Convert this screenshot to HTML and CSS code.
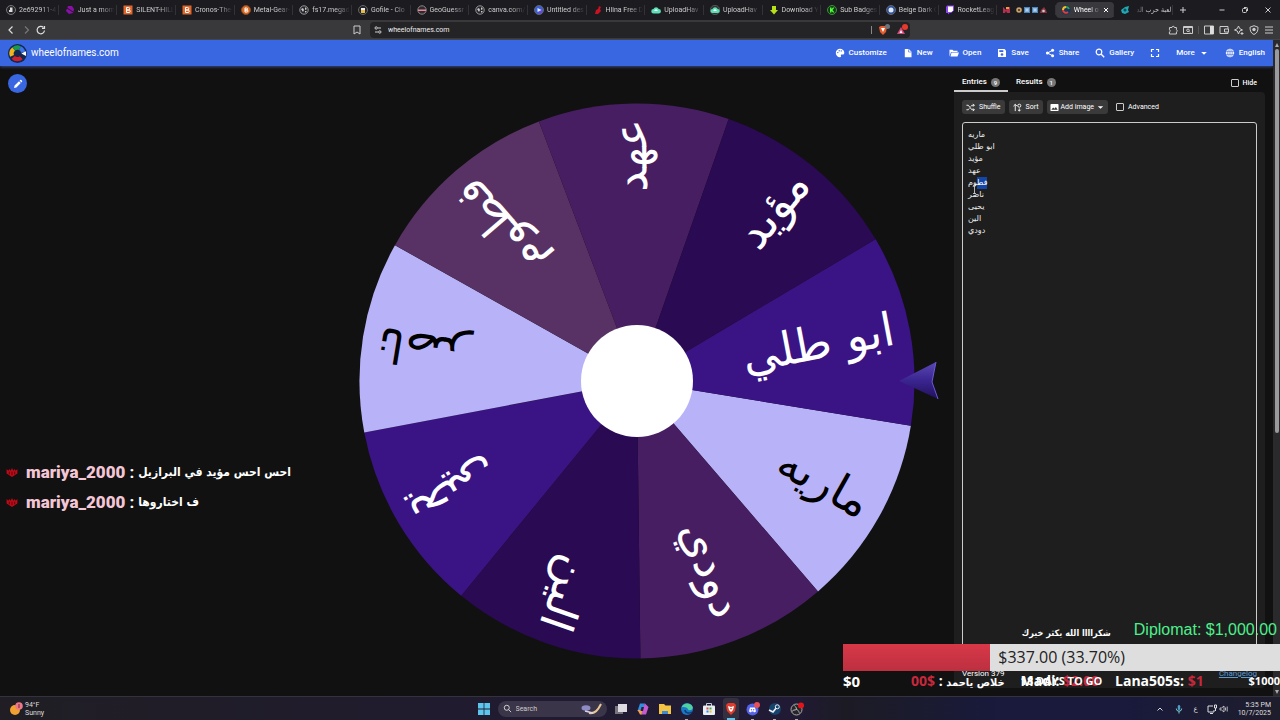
FILE: index.html
```html
<!DOCTYPE html>
<html lang="en">
<head>
<meta charset="utf-8">
<title>Wheel of Names</title>
<link rel="stylesheet" href="styles.css">
</head>
<body>
<div class="tabstrip">
  <div class="tabs">
    <div class="tab"><svg class="fav" viewBox="0 0 10 10"><circle cx="5" cy="5" r="4.5" fill="#25262b" stroke="#777"/><path d="M3 7V5h1V2.500h2.500V7z" fill="#ddd"/></svg><span>2e692911-4</span></div>
    <div class="tab"><svg class="fav" viewBox="0 0 10 10"><path d="M3 1h4l2 3-1 4-4 1-3-3z" fill="#8a0fa8"/><path d="M2 3l6 4" stroke="#1c1b20"/></svg><span>Just a mom</span></div>
    <div class="tab"><svg class="fav" viewBox="0 0 10 10"><path d="M.5.5h9v9h-9z" fill="#e0662a"/><path d="M3.500 2.500h2a1.200 1.200 0 010 2.500h-2zM3.500 5h2.500a1.200 1.200 0 010 2.500H3.500z" fill="none" stroke="#fff"/></svg><span>SILENT-HILL-</span></div>
    <div class="tab"><svg class="fav" viewBox="0 0 10 10"><path d="M.5.5h9v9h-9z" fill="#e0662a"/><path d="M3.500 2.500h2a1.200 1.200 0 010 2.500h-2zM3.500 5h2.500a1.200 1.200 0 010 2.500H3.500z" fill="none" stroke="#fff"/></svg><span>Cronos-The-</span></div>
    <div class="tab"><svg class="fav" viewBox="0 0 10 10"><circle cx="5" cy="5" r="4.500" fill="#d86a22" stroke="#8a4a20"/><path d="M4 3h1.500a1 1 0 010 2H4zM4 5h2a1 1 0 010 2H4z" fill="none" stroke="#fff"/></svg><span>Metal-Gear-</span></div>
    <div class="tab"><svg class="fav" viewBox="0 0 10 10"><circle cx="5" cy="5" r="4.200" fill="#25262b" stroke="#999"/><path d="M2 4l2-1 1 2-1 2zM6 2l2 2-2 1zM6 6h2L6 8z" fill="#ccc"/></svg><span>fs17.megad</span></div>
    <div class="tab"><svg class="fav" viewBox="0 0 10 10"><circle cx="5" cy="5" r="4.500" fill="#25262b" stroke="#666"/><path d="M3 3h4v3H3z" fill="#eee"/><path d="M3 5h4v3H3z" fill="#e5bb45"/></svg><span>Gofile - Clo</span></div>
    <div class="tab"><svg class="fav" viewBox="0 0 10 10"><circle cx="5" cy="5" r="4.200" fill="#302a30" stroke="#888"/><path d="M1 4.500h8v1.500H1z" fill="#e9899a"/></svg><span>GeoGuessr F</span></div>
    <div class="tab"><svg class="fav" viewBox="0 0 10 10"><circle cx="5" cy="5" r="4.200" fill="#25262b" stroke="#999"/><path d="M2 4l2-1 1 2-1 2zM6 2l2 2-2 1zM6 6h2L6 8z" fill="#ccc"/></svg><span>canva.com/</span></div>
    <div class="tab"><svg class="fav" viewBox="0 0 10 10"><circle cx="5" cy="5" r="4.500" fill="#3b5fd6" stroke="#666"/><circle cx="6" cy="6" r="2" fill="#7a3be0"/><path d="M3.500 3l4 2-4 2z" fill="#d8f4ff"/></svg><span>Untitled des</span></div>
    <div class="tab"><svg class="fav" viewBox="0 0 10 10"><path d="M6 1l2 1-1 2 1 2-3 3H2l1-4 2-1z" fill="#cc1122"/></svg><span>Hlina Free D</span></div>
    <div class="tab"><svg class="fav" viewBox="0 0 10 10"><path d="M2.500 8.500a2.200 2.200 0 010-4.500 2.800 2.800 0 015.200 0 2.200 2.200 0 010 4.500z" fill="#5ce0b5"/><path d="M5 4l2 2H3z" fill="#fff"/></svg><span>UploadHav</span></div>
    <div class="tab"><svg class="fav" viewBox="0 0 10 10"><circle cx="5" cy="5" r="4.700" fill="#333" stroke="#555"/><path d="M2.500 8a2 2 0 010-4 2.800 2.800 0 015.200 0 2 2 0 010 4z" fill="#5ce0b5"/><path d="M5 4l2 2H3z" fill="#fff"/></svg><span>UploadHav</span></div>
    <div class="tab"><svg class="fav" viewBox="0 0 10 10"><path d="M3 1h4v4h2L5 9.500 1 5h2z" fill="#b8e01a"/></svg><span>Download Y</span></div>
    <div class="tab"><svg class="fav" viewBox="0 0 10 10"><circle cx="5" cy="5" r="4.500" fill="#123b12" stroke="#3f8f3f"/><path d="M3 2.500h1.500V4L6 2.500h1.500L5.500 5l2 2.500H6L4.500 6v1.500H3z" fill="#4fff3a"/></svg><span>Sub Badges</span></div>
    <div class="tab"><svg class="fav" viewBox="0 0 10 10"><circle cx="5" cy="5" r="4.500" fill="#2a50a0" stroke="#666"/><circle cx="5" cy="5" r="2.500" fill="#dfeaff"/></svg><span>Beige Dark C</span></div>
    <div class="tab"><svg class="fav" viewBox="0 0 10 10"><path d="M2 .5h7v5L6 8H4.500L3 9.500V8H1V2z" fill="#8b45f0"/><path d="M3 1.500h5v4L6.500 7H3z" fill="#fff"/></svg><span>RocketLeag</span></div>
    <div class="tab emoji"><svg class="fav wide" viewBox="0 0 46 10"><path d="M1 2l3 3 1-3 3 0v6H5L4 6 3 8H1z" fill="#b72f50"/><path d="M4 2h3v2H4z" fill="#e5a238"/><circle cx="17" cy="5" r="2.800" fill="#c9a26a"/><path d="M16 4h2v2h-2z" fill="#5a4636"/><path d="M22 2h6v6h-6zM30 2h6v6h-6z" fill="#4a86bd"/><path d="M24 3v4M26 3v4M24 5h2M32 3v4M34 3v4M32 5h2" stroke="#d5e8f8"/><path d="M38 8l1-3 3-3 2 3 1 3z" fill="#8c3540"/><circle cx="41.500" cy="6" r="1.300" fill="#ccc"/></svg></div>
    <div class="tab active"><svg class="fav" viewBox="0 0 10 10"><circle cx="5" cy="5" r="4.500" fill="#16365f"/><path d="M2 5a3 3 0 013-3" stroke="#f2bd25" stroke-width="2" fill="none"/><path d="M5 2a3 3 0 013 2" stroke="#2fa24a" stroke-width="2" fill="none"/><path d="M2 5a3 3 0 005 2" stroke="#e33b35" stroke-width="2" fill="none"/></svg><span>Wheel o</span><button class="tab-close" aria-label="Close tab"><svg viewBox="0 0 6 6"><path d="M1 1l4 4M5 1L1 5" stroke="#fff"/></svg></button></div>
    <div class="tab"><svg class="fav" viewBox="0 0 10 10"><path d="M1 5l4-3 4-1-1 4 1 2-4 2-3-1z" fill="#20a9b0"/><circle cx="5" cy="5" r="1.500" fill="#0b4e60"/></svg><span dir="rtl">لعبة حرب الد</span></div>
  </div>
  <div class="window-tools">
    <button aria-label="New tab"><svg viewBox="0 0 8 8"><path d="M4 1v6M1 4h6" stroke="#ccc"/></svg></button>
    <div class="window-buttons">
      <button aria-label="Minimize"><svg viewBox="0 0 8 8"><path d="M1.500 4h5" stroke="#ccc"/></svg></button>
      <button aria-label="Restore"><svg viewBox="0 0 8 8"><rect x="1.500" y="2.500" width="4" height="4" rx="1" fill="none" stroke="#ccc"/><path d="M3 1.500h2.500a1 1 0 011 1V5" fill="none" stroke="#ccc"/></svg></button>
      <button aria-label="Close"><svg viewBox="0 0 8 8"><path d="M1.500 1.500l5 5M6.500 1.500l-5 5" stroke="#ccc"/></svg></button>
    </div>
  </div>
</div>

<div class="toolbar">
  <div class="nav-buttons">
    <button aria-label="Back"><svg viewBox="0 0 10 10"><path d="M6.500 1.500L3 5l3.500 3.500" fill="none" stroke="#ddd" stroke-width="1.200"/></svg></button>
    <button aria-label="Forward"><svg viewBox="0 0 10 10"><path d="M4 1.500L7.500 5 4 8.500" fill="none" stroke="#777" stroke-width="1.200"/></svg></button>
    <button aria-label="Reload"><svg viewBox="0 0 10 10"><path d="M8.500 5.500a3.700 3.700 0 11-1-3M8.500 1v2.500H6" fill="none" stroke="#ddd" stroke-width="1.200"/></svg></button>
  </div>
  <div class="address-row">
    <button aria-label="Bookmark"><svg viewBox="0 0 10 10"><path d="M2 1h6v8L5 7 2 9z" fill="none" stroke="#ccc"/></svg></button>
    <div class="address">
      <svg class="ic8" viewBox="0 0 8 8"><path d="M4 2h3M1 6h3" stroke="#ccc"/><circle cx="2.200" cy="2" r="1.200" fill="none" stroke="#ccc"/><circle cx="5.800" cy="6" r="1.200" fill="none" stroke="#ccc"/></svg>
      <input type="text" aria-label="Address" value="wheelofnames.com">
      <span class="bar"></span>
      <svg class="shield" viewBox="0 0 12 12"><path d="M1 3l2-1h4l2 1-1 5-3 3-3-3z" fill="#e55b2b"/><path d="M3 4h4L5 8z" fill="#fff"/><circle cx="9.500" cy="2.500" r="2.500" fill="#6d747c"/></svg>
      <svg class="shield" viewBox="0 0 12 12"><path d="M5 3l4 7H1z" fill="#d24a7a"/><path d="M5 6l1.500 3h-3z" fill="#fff"/><circle cx="9" cy="3" r="3" fill="#e8392b"/></svg>
    </div>
  </div>
  <div class="tool-icons">
    <button aria-label="Extensions"><svg viewBox="0 0 10 10"><path d="M1.500 2.500H4a1.200 1.200 0 012.400 0h2v2.200a1.200 1.200 0 010 2.300v2h-7V7a1.200 1.200 0 000-2.300z" fill="none" stroke="#ccc"/></svg></button>
    <button aria-label="Search tabs"><svg viewBox="0 0 10 10"><path d="M.5 1.500h9v7h-9z" fill="none" stroke="#ccc"/><path d="M.5 2.500h9" stroke="#ccc"/><circle cx="5" cy="5.300" r="1.300" fill="none" stroke="#ccc"/><path d="M6 6.300l1.200 1.200" stroke="#ccc"/></svg></button>
    <span class="bar dim"></span>
    <button aria-label="Sidebar"><svg viewBox="0 0 10 10"><path d="M.5 1h9v8h-9z" fill="none" stroke="#ccc"/><path d="M6 1h3.500v8H6z" fill="#ddd"/></svg></button>
    <button aria-label="Wallet"><svg viewBox="0 0 10 10"><path d="M9 4V1.500H1v7h8V7M5.500 4h4v3h-4z" fill="none" stroke="#ccc"/></svg></button>
    <button aria-label="Assistant"><svg viewBox="0 0 10 10"><path d="M4.500 1l1.200 2.600L8.500 5 5.700 6 4.500 9 3.300 6 .5 5l2.800-1.400z" fill="none" stroke="#ccc"/><path d="M8 7v3M6.500 8.500h3" stroke="#ccc"/></svg></button>
    <button aria-label="VPN"><svg viewBox="0 0 10 10"><path d="M5 .7l4 1.500c0 4-1 6-4 7.300C2 8.200 1 6.200 1 2.200z" fill="none" stroke="#ccc"/><circle cx="5" cy="4.500" r="1.700" fill="#ccc"/></svg></button>
    <button aria-label="Menu"><svg viewBox="0 0 10 10"><path d="M1 2h8M1 5h8M1 8h8" stroke="#ccc"/></svg></button>
  </div>
</div>

<div class="viewport">
  <div class="page">
    <header class="site-header">
      <a class="brand" href="#"><svg viewBox="0 0 20 20"><circle cx="10" cy="10" r="10" fill="#12284e"/><g fill="none" stroke-width="4.500"><path d="M4.300 12.500A6 6 0 016 5.300" stroke="#f0b51c"/><path d="M6 5.300A6 6 0 0112.500 4.300" stroke="#189a48"/><path d="M12.500 4.300A6 6 0 0116 9" stroke="#3c73e8"/><path d="M5.500 14A6 6 0 0014 14.500" stroke="#d01f2c"/></g><path d="M14 10l5-2.500v5z" fill="#fff"/></svg>wheelofnames.com</a>
      <nav class="site-nav">
        <button><svg viewBox="0 0 10 10"><path d="M5 .8a4.200 4.200 0 000 8.400c1 0 1.300-.8.900-1.400-.3-.8.200-1.300.9-1.300h1c1 0 1.500-.8 1.500-1.800C9.300 2.500 7.400.8 5 .8z" fill="#fff"/><circle cx="2.800" cy="4.600" r=".7" fill="#3967e2"/><circle cx="4.200" cy="2.800" r=".7" fill="#3967e2"/><circle cx="6.300" cy="2.900" r=".7" fill="#3967e2"/></svg>Customize</button>
        <button><svg viewBox="0 0 10 10"><path d="M1.800 1h4l2.700 2.700V9.200H1.800z" fill="#fff"/><path d="M5.500 1.300V4h2.800" stroke="#3967e2" stroke-width=".6" fill="none"/></svg>New</button>
        <button><svg viewBox="0 0 10 10"><path d="M.5 8.500V1.800h3l1 1h4V4H2z" fill="#fff"/><path d="M2.500 4.500H10l-1.500 4h-7z" fill="#fff"/></svg>Open</button>
        <button><svg viewBox="0 0 10 10"><path d="M1 1h6.500L9 2.500V9H1z" fill="#fff"/><path d="M2.300 2.200h4V4h-4z" fill="#3967e2"/><circle cx="5" cy="6.500" r="1.300" fill="#3967e2"/></svg>Save</button>
        <button><svg viewBox="0 0 10 10"><path d="M7.500 2.300L2.500 5l5 2.700" fill="none" stroke="#fff"/><circle cx="7.600" cy="2.300" r="1.500" fill="#fff"/><circle cx="2.400" cy="5" r="1.500" fill="#fff"/><circle cx="7.600" cy="7.700" r="1.500" fill="#fff"/></svg>Share</button>
        <button><svg viewBox="0 0 10 10"><circle cx="4" cy="4" r="2.800" fill="none" stroke="#fff" stroke-width="1.200"/><path d="M6 6l3.200 3.200" stroke="#fff" stroke-width="1.300"/></svg>Gallery</button>
        <button aria-label="Fullscreen"><svg viewBox="0 0 10 10"><path d="M1.500 4V1.500H4M6 1.500h2.500V4M8.500 6v2.500H6M4 8.500H1.500V6" fill="none" stroke="#fff" stroke-width="1.200"/></svg></button>
        <button>More<svg viewBox="0 0 10 10"><path d="M2.200 4h5.600L5 6.800z" fill="#fff"/></svg></button>
        <button><svg viewBox="0 0 10 10"><circle cx="5" cy="5" r="4.200" fill="#fff"/><path d="M1 3.600h8M1 6.400h8M5 1v8M3.500 1.500c-1 2-1 5 0 7M6.500 1.500c1 2 1 5 0 7" fill="none" stroke="#3967e2" stroke-width=".6"/></svg>English</button>
      </nav>
    </header>
    <main class="content">
      <div class="left">
        <button class="edit" aria-label="Edit title"><svg viewBox="0 0 10 10"><path d="M1 9l.6-2.400L6 2.200 7.800 4 3.400 8.400zM6.600 1.600l.6-.6a.8.800 0 011.100 0l.7.700a.8.800 0 010 1.100l-.6.600z" fill="#fff"/></svg></button>
      </div>
      <svg class="wheel" viewBox="-278 -278 556 556" role="img" aria-label="Wheel of names">
        <defs>
          <path id="slice" d="M0 0L260.800-94.900A277.500 277.500 0 0 1 260.800 94.900Z"/>
          <linearGradient id="pin" x1="0" y1="0" x2="0" y2="1"><stop offset="0" stop-color="#5b48b4"/><stop offset=".5" stop-color="#3a2590"/><stop offset="1" stop-color="#22105c"/></linearGradient>
        </defs>
        <g transform="rotate(29.300)" fill="#b8b3f8"><use href="#slice"/><text class="name dark" x="262" y="12">ماريه</text></g>
        <g transform="rotate(69.300)" fill="#481e62"><use href="#slice"/><text class="name" x="252" y="12">دودي</text></g>
        <g transform="rotate(109.300)" fill="#2a0a52"><use href="#slice"/><text class="name" x="262" y="12">الين</text></g>
        <g transform="rotate(149.300)" fill="#3a1484"><use href="#slice"/><text class="name" x="262" y="12">يحيى</text></g>
        <g transform="rotate(189.300)" fill="#b8b3f8"><use href="#slice"/><text class="name dark" x="262" y="12">ناصر</text></g>
        <g transform="rotate(229.300)" fill="#583264"><use href="#slice"/><text class="name" x="262" y="12">فطوم</text></g>
        <g transform="rotate(269.300)" fill="#481e62"><use href="#slice"/><text class="name" x="262" y="12">عهد</text></g>
        <g transform="rotate(309.300)" fill="#2a0a52"><use href="#slice"/><text class="name" x="262" y="12">مؤيد</text></g>
        <g transform="rotate(349.300)" fill="#3a1484"><use href="#slice"/><text class="name" x="262" y="12">ابو طلي</text></g>
        <circle r="56" fill="#fff"/>
        <path d="M262 0L299-19 295 1 301 18Z" fill="url(#pin)"/>
        <path d="M299-19L295 1 301 18" fill="none" stroke="#6a5ad8"/>
      </svg>
      <aside class="panel">
        <div class="panel-tabs">
          <button class="ptab current">Entries <span class="count">9</span></button>
          <button class="ptab">Results <span class="count">1</span></button>
          <label class="check hide"><input type="checkbox">Hide</label>
        </div>
        <div class="card">
          <div class="actions">
            <button class="btn"><svg viewBox="0 0 10 10"><path d="M.5 2.500h2l4 5h2.500M.5 7.500h2l1.200-1.500M5.300 4L6.500 2.500H9M7.800 1l1.500 1.500L7.800 4M7.800 6l1.500 1.500L7.800 9" fill="none" stroke="#fff"/></svg>Shuffle</button>
            <button class="btn"><svg viewBox="0 0 10 10"><path d="M2.500 9V1.500M.5 3.500l2-2 2 2M7 6v3M5.500 7.500L7 9l1.500-1.500" fill="none" stroke="#fff"/><circle cx="7" cy="3" r="1.700" fill="none" stroke="#fff"/></svg>Sort</button>
            <button class="btn tight"><svg viewBox="0 0 10 10"><rect x=".5" y="1" width="9" height="8" rx="1" fill="#fff"/><path d="M1.500 7.500l2-2.500 1.500 1.500L6.500 4.500l2 3z" fill="#333"/></svg>Add image<svg viewBox="0 0 10 10"><path d="M2 3.500h6L5 6.500z" fill="#fff"/></svg></button>
            <label class="check"><input type="checkbox">Advanced</label>
          </div>
          <textarea id="entries" aria-label="Entries" spellcheck="false">ماريه
ابو طلي
مؤيد
عهد
فطوم
ناصر
يحيى
الين
دودي</textarea>
          <div class="card-foot"><span>Version 379</span><a href="#">Changelog</a></div>
          <svg class="ibeam" viewBox="0 0 5 9"><path d="M1 .5h3M1 8.500h3M2.500.5v8" stroke="#ddd" stroke-width=".8"/></svg>
        </div>
      </aside>
    </main>
  </div>
  <div class="scrollbar"><span class="arrow-up"></span><span class="thumb"></span><span class="arrow-down"></span></div>

  <div class="chat">
    <p><svg viewBox="0 0 12 10"><path d="M0 1l2 2 1-2 1.500 2L6 0l1.500 3L9 1l1 2 2-2v5L9 8 6 10 3 8 0 6z" fill="#c00a18"/><path d="M3 4v3M6 4v4M9 4v3" stroke="#4a0309"/></svg><b>mariya_2000</b><span>:</span><bdi>احس احس مؤيد في البرازيل</bdi></p>
    <p><svg viewBox="0 0 12 10"><path d="M0 1l2 2 1-2 1.500 2L6 0l1.500 3L9 1l1 2 2-2v5L9 8 6 10 3 8 0 6z" fill="#c00a18"/><path d="M3 4v3M6 4v4M9 4v3" stroke="#4a0309"/></svg><b>mariya_2000</b><span>:</span><bdi>ف اختاروها</bdi></p>
  </div>

  <div class="goal">
    <div class="top-donor"><span class="thanks" dir="rtl">شكراااا الله يكثر خيرك</span><span class="diplomat">Diplomat: $1,000.00</span></div>
    <div class="goal-bar"><div class="goal-fill" style="width:33.7%"></div><span>$337.00 (33.70%)</span></div>
    <div class="goal-foot">
      <span class="zero">$0</span>
      <div class="ticker">
        <span><i>00$</i> : <bdi>خلاص ياحمد</bdi></span>
        <span class="stack">Madi: <i>$2.00</i><em>18 DAYS TO GO</em></span>
        <span>Lana505s: <i>$1</i></span>
      </div>
      <span class="total">$1000</span>
    </div>
  </div>
</div>

<div class="taskbar">
  <div class="weather"><svg viewBox="0 0 14 14"><circle cx="6" cy="8" r="5" fill="#f0a130"/><circle cx="10" cy="4" r="3.800" fill="#e8788a"/><path d="M10 2v4" stroke="#7a2030"/></svg><div>94°F<br>Sunny</div></div>
  <div class="apps">
    <button aria-label="Start"><svg viewBox="0 0 14 14"><path d="M1 1h5.600v5.600H1zM7.400 1H13v5.600H7.400zM1 7.400h5.600V13H1zM7.400 7.400H13V13H7.400z" fill="#5cc5ee"/></svg></button>
    <label class="search"><svg viewBox="0 0 10 10"><circle cx="4.200" cy="4.200" r="2.800" fill="none" stroke="#ddd"/><path d="M6.300 6.300L9 9" stroke="#ddd"/></svg><input type="text" placeholder="Search" aria-label="Search"><svg class="art" viewBox="0 0 22 12"><ellipse cx="5" cy="5" rx="4.500" ry="2.800" fill="#8e8bc4"/><path d="M8 10c6 1 9-3 12-9" fill="none" stroke="#e8c795" stroke-width="2"/><path d="M4 8l8 2" stroke="#d8d4ea" stroke-width="1.500"/></svg></label>
    <button aria-label="Task view"><svg viewBox="0 0 14 14"><path d="M1 4h8v8H1z" fill="#77747c"/><path d="M4 2h9v8H4z" fill="#dedce2"/></svg></button>
    <button aria-label="Copilot"><svg viewBox="0 0 14 14"><path d="M4 1.500h5L7 9H1.500z" fill="#2f8ee0"/><path d="M9 1.500l3.500 3.500L10 12.500H5L7.500 5z" fill="#c65bd0"/><path d="M1.500 8h5l-1 4.500H4z" fill="#f0a050"/><path d="M5.500 5L8 5 7 9H4.500z" fill="#2b2038"/></svg></button>
    <button aria-label="File Explorer"><svg viewBox="0 0 14 14"><path d="M1 2h5l1.500 1.500H13V12H1z" fill="#f5c443"/><path d="M4 9h6v3H4z" fill="#3f8ad8"/></svg></button>
    <button class="running" aria-label="Edge"><svg viewBox="0 0 14 14"><circle cx="7" cy="7" r="6" fill="#1a78c8"/><path d="M1.500 5.500C3 1 10 0 12.500 4.500 14 8 9 9 8 7.500c0-2-4-3-6.500-2z" fill="#4fd0a0"/><path d="M5 8c0 3 4 4 7 2" fill="none" stroke="#103c70" stroke-width="1.500"/></svg></button>
    <button aria-label="Store"><svg viewBox="0 0 14 14"><path d="M4.500 4V1.500h5V4" fill="none" stroke="#bcd"/><rect x="1" y="3.500" width="12" height="9.500" rx="1" fill="#e8eef2"/><path d="M4.500 5.500h2v2h-2z" fill="#e44"/><path d="M7.500 5.500h2v2h-2z" fill="#4a4"/><path d="M4.500 8.500h2v2h-2z" fill="#38e"/><path d="M7.500 8.500h2v2h-2z" fill="#eb3"/></svg></button>
    <button class="running on" aria-label="Brave"><svg viewBox="0 0 14 14"><path d="M2 3l2-2h6l2 2-1 6-4 4-4-4z" fill="#e33b2b"/><path d="M4 4l3 1 3-1-1 4-2 2-2-2z" fill="#fff"/><path d="M6 6h2l-1 2z" fill="#e33b2b"/></svg></button>
    <button class="running" aria-label="Discord"><svg viewBox="0 0 14 14"><circle cx="6.500" cy="7.500" r="6" fill="#5562e8"/><path d="M3 9.500l1-4h5l1 4-2 1-.5-1h-2l-.5 1z" fill="#fff"/><circle cx="11" cy="3" r="3" fill="#e5505a"/><circle cx="5.500" cy="7.700" r=".7" fill="#5562e8"/><circle cx="7.700" cy="7.700" r=".7" fill="#5562e8"/></svg></button>
    <button class="running" aria-label="Steam"><svg viewBox="0 0 14 14"><circle cx="7" cy="7" r="6" fill="#14436d"/><path d="M1 8l4 2 4-5" fill="none" stroke="#eee" stroke-width="1.700"/><circle cx="9.300" cy="4.800" r="2" fill="#14436d" stroke="#eee"/></svg></button>
    <button class="running" aria-label="OBS"><svg viewBox="0 0 14 14"><circle cx="6.500" cy="7.500" r="5.500" fill="#26252a" stroke="#aaa"/><path d="M6.500 7.500c0-3-2-3-2-4M6.500 7.500c3 1 2 3 3 3.500M6.500 7.500c-2 1-4 0-4 2" fill="none" stroke="#bbb"/><circle cx="11" cy="3.500" r="3" fill="#e0161c"/></svg></button>
  </div>
  <div class="tray">
    <svg viewBox="0 0 10 10"><path d="M2.500 6.500L5 4l2.500 2.500" fill="none" stroke="#ddd"/></svg>
    <svg viewBox="0 0 10 10"><rect x="3.800" y="1" width="2.400" height="5" rx="1.200" fill="#4e9fc4"/><path d="M2.300 4.500a2.700 2.700 0 005.400 0M5 7v2.500" fill="none" stroke="#7cc"/></svg>
    <span>ع</span>
    <div class="net"><svg viewBox="0 0 10 10"><path d="M6 2H1v6h6V6M3 9.500h3M7.500 1h2v3h-2zM8.500 4v3" fill="none" stroke="#ddd"/></svg><svg viewBox="0 0 10 10"><path d="M1 4h1.500L5 2v6L2.500 6H1z" fill="none" stroke="#ddd" stroke-width=".8"/><path d="M6.500 3.500v3M8.200 2.500v5" stroke="#ddd" stroke-width=".8"/></svg></div>
    <div class="clock">5:35 PM<br>10/7/2025</div>
  </div>
</div>
<script src="script.js"></script>
</body>
</html>
```
FILE: styles.css
```css
* { box-sizing: border-box; }
body {
  margin: 0;
  height: 100vh;
  display: flex;
  flex-direction: column;
  overflow: hidden;
  background: #111;
  color: #fff;
  font: 8px/12px Roboto, "DejaVu Sans", sans-serif;
}
button { background: none; border: 0; padding: 0; margin: 0; color: inherit; font: inherit; display: flex; align-items: center; justify-content: center; }
input, textarea { font: inherit; color: inherit; margin: 0; }
svg { display: block; flex: none; }
p { margin: 0; }
i, em { font-style: normal; }

.tabstrip { flex: none; height: 20px; display: flex; background: #1c1b20; color: #ccc; font-size: 7px; }
.tabs { flex: 1; min-width: 0; display: flex; }
.tab { flex: 1 1 58px; min-width: 0; display: flex; align-items: center; gap: 3px; padding: 0 2px 0 6px; position: relative; }
.tab::after { content: ""; position: absolute; right: 0; top: 5px; height: 10px; width: 1px; background: #333238; }
.tab span { flex: 1; min-width: 0; overflow: hidden; white-space: nowrap; mask-image: linear-gradient(90deg, #000 60%, transparent); }
.tab span[dir] { mask-image: linear-gradient(270deg, #000 60%, transparent); font: 7px/12px "DejaVu Sans Condensed", "DejaVu Sans", sans-serif; }
.fav { width: 10px; height: 10px; }
.fav.wide { width: 46px; }
.emoji { padding: 0 5px; }
.active { background: #39383d; border-radius: 4px; margin: 2px 0; color: #fff; padding: 0 5px; }
.tab-close svg { width: 6px; height: 6px; }
.window-tools { flex: none; width: 107px; display: flex; justify-content: space-between; padding: 0 8px 0 6px; }
.window-tools svg { width: 8px; height: 8px; }
.window-buttons { display: flex; gap: 15px; }

.toolbar { flex: none; height: 20px; display: grid; grid-template-columns: 352fr 558fr 370fr; align-items: center; background: #39393c; border-bottom: 1px solid #444448; }
.toolbar button svg { width: 10px; height: 10px; }
.nav-buttons { display: flex; gap: 5px; padding-left: 6px; }
.address-row { display: flex; align-items: center; gap: 8px; }
.address { flex: 1; height: 16px; display: flex; align-items: center; gap: 6px; padding: 0 2px 0 4px; background: #242427; border-radius: 4px; }
.address input { flex: 1; min-width: 0; padding: 0; background: none; border: 0; color: #eee; font-size: 7px; }
.ic8 { width: 8px; height: 8px; }
.shield { width: 12px; height: 12px; }
.bar { width: 1px; height: 8px; background: #888; }
.bar.dim { background: #555; }
.tool-icons { display: flex; align-items: center; justify-content: flex-end; gap: 5px; padding-right: 6px; }

.viewport { flex: 1; min-height: 0; display: flex; position: relative; }
.page { flex: 1; min-width: 0; display: flex; flex-direction: column; }
.site-header { flex: none; height: 26px; display: flex; align-items: center; justify-content: space-between; padding: 0 8px; background: #3967e2; box-shadow: 0 1px 3px #3a4a80; }
.brand { display: flex; align-items: center; gap: 4px; color: #fff; text-decoration: none; font-size: 10px; line-height: 16px; }
.brand svg { width: 19px; height: 19px; }
.site-nav { display: flex; gap: 16px; font-weight: 500; font-size: 8px; }
.site-nav button { gap: 4px; }
.site-nav svg { width: 10px; height: 10px; }

.content { flex: 1; min-height: 0; display: grid; grid-template-columns: 1fr minmax(0, 556px) 1fr; align-items: center; }
.left { align-self: start; padding: 8px; }
.edit { width: 19px; height: 19px; border-radius: 50%; background: #3967e2; }
.edit svg { width: 10px; height: 10px; }
.wheel { width: 100%; overflow: visible; }
.name { font: 46px "DejaVu Sans", sans-serif; text-anchor: end; fill: #fff; }
.name.dark { fill: #000; }

.panel { align-self: stretch; justify-self: end; width: 311px; margin: 8px 8px 8px 0; display: flex; flex-direction: column; }
.panel-tabs { flex: none; height: 18px; display: flex; font-weight: 500; }
.ptab { padding: 0 8px; gap: 4px; border-bottom: 2px solid transparent; }
.ptab.current { border-color: #ccc; }
.count { width: 9px; height: 9px; border-radius: 50%; background: #777; font-size: 6px; line-height: 9px; text-align: center; }
.check { display: flex; align-items: center; gap: 4px; font-size: 7px; }
.check input { appearance: none; width: 8px; height: 8px; border: 1px solid #ccc; border-radius: 1px; }
.hide { margin-left: auto; padding-right: 8px; }
.card { flex: 1; min-height: 0; position: relative; display: flex; flex-direction: column; padding: 8px; background: #1e1e1e; border-radius: 0 4px 4px 4px; }
.ibeam { position: absolute; left: 18px; top: 93px; width: 5px; height: 9px; }
.actions { flex: none; display: flex; gap: 4px; font-size: 7px; margin-bottom: 8px; }
.btn { height: 14px; padding: 0 4px; gap: 4px; border-radius: 3px; background: #3a3a3a; }
.btn svg { width: 9px; height: 9px; }
.btn.tight { gap: 2px; padding: 0 3px; }
.actions .check { margin-left: 4px; }
#entries { flex: 1; min-height: 0; width: 100%; resize: none; overflow: hidden; padding: 6px 5px; background: #1e1e1e; border: 1px solid #ccc; border-radius: 3px; outline: 0; font: 8px/12px "DejaVu Sans", sans-serif; color: #eee; }
#entries::selection { background: #1446a8; color: #fff; }
.card-foot { flex: none; display: flex; justify-content: space-between; font-size: 8px; line-height: 12px; }
.card-foot a { color: #5b9bd5; }

.scrollbar { flex: none; width: 7px; display: flex; flex-direction: column; align-items: center; background: #2a2a2c; padding: 3px 0 2px; }
.thumb { width: 4px; height: 59%; margin-top: 2px; border-radius: 2px; background: #9a9a9c; }
.arrow-up, .arrow-down { border: 2px solid transparent; }
.arrow-up { border-bottom-color: #aaa; border-top: 0; border-bottom-width: 4px; }
.arrow-down { margin-top: auto; border-top-color: #aaa; border-bottom: 0; border-top-width: 4px; }

.chat { position: absolute; left: 6px; bottom: 179px; font-size: 17px; line-height: 30px; font-weight: 700; }
.chat p { display: flex; align-items: center; white-space: nowrap; gap: 4px; }
.chat svg { width: 12px; height: 9px; margin-right: 4px; }
.chat b { color: #f3c6d6; }
.chat bdi { font-family: "DejaVu Sans Condensed", "DejaVu Sans", sans-serif; font-size: 12px; }

.goal { position: absolute; right: 0; bottom: 4px; width: 437px; }
.top-donor { display: flex; justify-content: flex-end; align-items: center; gap: 23px; height: 28px; padding-right: 3px; white-space: nowrap; }
.thanks { font: bold 9px "DejaVu Sans Condensed", "DejaVu Sans", sans-serif; padding-top: 6px; }
.diplomat { font: 16px "Liberation Sans", sans-serif; color: #4cf08c; }
.goal-bar { position: relative; display: flex; height: 27px; background: #dedede; color: #222; font: 16px/27px "Open Sans", sans-serif; }
.goal-bar span { padding-left: 8px; }
.goal-fill { background: linear-gradient(#d83848, #bc3040); }
.goal-foot { display: flex; align-items: flex-start; height: 21px; font: bold 14px/20px "Open Sans", "DejaVu Sans", sans-serif; white-space: nowrap; }
.zero { width: 68px; font-size: 15px; }
.ticker { flex: 1; min-width: 0; display: flex; gap: 16px; overflow: hidden; }
.ticker i { color: #c8283c; }
.ticker bdi { font-family: "DejaVu Sans Condensed", "DejaVu Sans", sans-serif; font-size: 11px; }
.stack { position: relative; }
.stack em { position: absolute; left: 0; top: 0; font-size: 11px; }
.total { font-size: 11px; }

.taskbar { flex: none; height: 24px; display: grid; grid-template-columns: 1fr auto 1fr; align-items: center; border-top: 1px solid #34323c; background: linear-gradient(90deg, #201e24, #201b30 40%, #211a35 62%, #1c1b24 66%, #191a3c 78%, #191a3c 88%, #1e1d2c); color: #ddd; font-size: 7px; line-height: 8px; }
.weather { display: flex; align-items: center; gap: 2px; padding-left: 9px; }
.weather svg { width: 14px; height: 14px; }
.apps { display: flex; align-items: center; gap: 6px; }
.apps button { position: relative; width: 16px; height: 22px; }
.apps button svg { width: 14px; height: 14px; }
.running::after { content: ""; position: absolute; bottom: 0; width: 3px; height: 1px; background: #aaa; }
.on { background: #35303f; border-radius: 3px; }
.on::after { width: 8px; height: 2px; background: #5cc5ee; }
.search { display: flex; align-items: center; gap: 4px; width: 109px; height: 16px; padding: 0 4px 0 5px; border-radius: 8px; background: #3b3549; }
.search svg { width: 9px; height: 9px; }
.search .art { width: 22px; height: 12px; }
.search input { flex: 1; min-width: 0; padding: 0; border: 0; background: none; font-size: 7px; }
.search input::placeholder { color: #ccc; opacity: 1; }
.tray { display: flex; align-items: center; justify-content: flex-end; gap: 9px; padding-right: 9px; }
.tray svg { width: 10px; height: 10px; }
.net { display: flex; gap: 2px; }
.clock { text-align: right; }
```
FILE: script.js
```js
const entries = document.getElementById("entries");
const start = entries.value.indexOf("فطوم");
entries.focus();
entries.setSelectionRange(start, start + 2);
```
